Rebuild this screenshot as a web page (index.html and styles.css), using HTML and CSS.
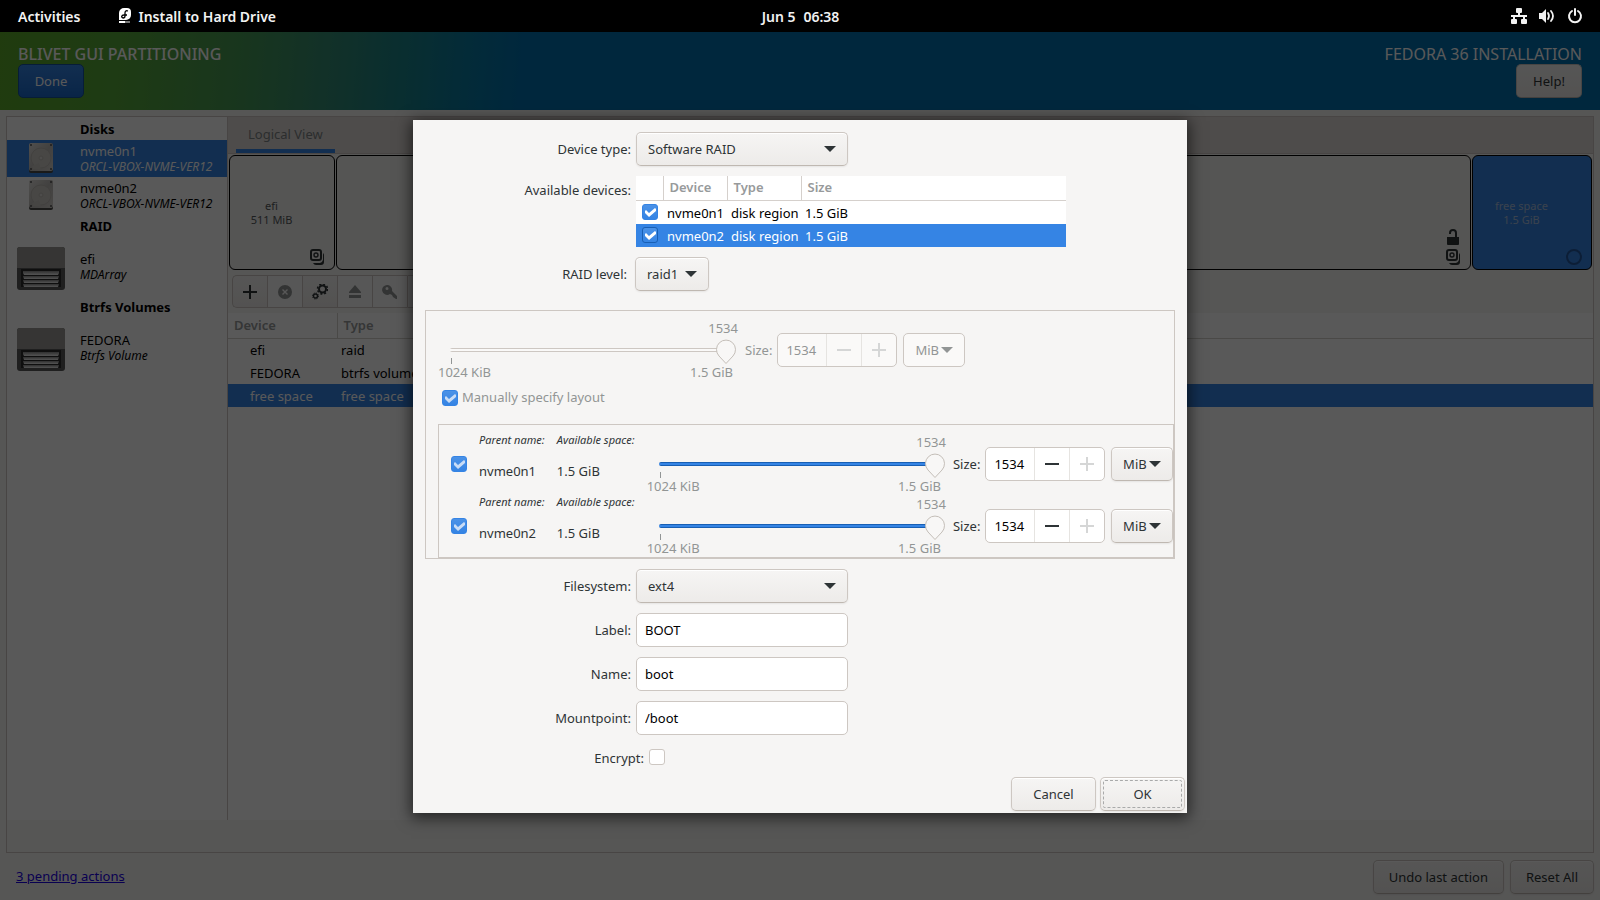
FILE: index.html
```
<!DOCTYPE html>
<html lang="en">
<head>
  <meta charset="UTF-8" />
  <meta name="viewport" content="width=device-width, initial-scale=1.0"/>
  <title>Install to Hard Drive</title>
  <link rel="stylesheet" href="styles.css">
</head>
<body>

  <!-- shared icons -->
  <svg width="0" height="0" class="defs">
    <linearGradient id="metal" x1="0" y1="0" x2="1" y2="1">
      <stop offset="0" stop-color="#e4e2df"/><stop offset="0.5" stop-color="#bdbab6"/><stop offset="1" stop-color="#d3d0cc"/>
    </linearGradient>
    <linearGradient id="tray" x1="0" y1="0" x2="0" y2="1">
      <stop offset="0" stop-color="#8a8a8a"/><stop offset="1" stop-color="#f0f0f0"/>
    </linearGradient>
    <symbol id="i-disk" viewBox="0 0 24 30">
      <rect x="0" y="1" width="24" height="29" rx="2" fill="#4a4a48"/>
      <rect x="0" y="0" width="24" height="28" rx="2" fill="url(#metal)"/>
      <circle cx="12" cy="15" r="10" fill="#cfccc7" stroke="#bdb9b4"/>
      <circle cx="12" cy="15" r="2" fill="#dddad6" stroke="#bdb9b4"/>
      <path d="M3 23l7-3 2 6H4z" fill="#c8c5c0"/>
      <g fill="#555"><circle cx="2" cy="2" r="1"/><circle cx="22" cy="2" r="1"/><circle cx="2" cy="26" r="1"/><circle cx="22" cy="26" r="1"/></g>
    </symbol>
    <symbol id="i-raid" viewBox="0 0 48 43">
      <rect width="48" height="43" rx="3" fill="#5a5a5a"/>
      <path d="M0 21V3a3 3 0 0 1 3-3h42a3 3 0 0 1 3 3v18z" fill="#9a9996"/>
      <path d="M4 22h40v18H4z" fill="#2c2c2c"/>
      <g fill="url(#tray)">
        <path d="M6 24h36v2l-1 2H7l-1-2z"/><path d="M6 29h36l-1 3H7z"/><path d="M6 33h36l-1 3H7z"/><path d="M6 37h36l-1 3H7z"/>
      </g>
    </symbol>
    <symbol id="i-stack" viewBox="0 0 16 16">
      <rect x="2" y="1" width="10" height="10" rx="2" fill="none" stroke="currentColor" stroke-width="2"/>
      <circle cx="7" cy="6" r="2" fill="none" stroke="currentColor" stroke-width="1.4"/>
      <path d="M14 4q1 1 1 2v7q0 3-3 3H7q-2 0-3-2h7q2 0 3-3z" fill="currentColor"/>
    </symbol>
    <symbol id="i-lock" viewBox="0 0 16 16">
      <path d="M2 8h12v7q0 1-1 1H3q-1 0-1-1z" fill="currentColor"/>
      <path d="M5 5V4a3 3 0 0 1 6 0v5" fill="none" stroke="currentColor" stroke-width="2"/>
    </symbol>
  </svg>

  <div class="top-bar">
    <div class="top-left">
      <span>Activities</span>
      <span class="app">
        <svg width="14" height="16" viewBox="0 0 14 16">
          <path d="M6 0h3a4 4 0 0 1 4 4v3a5 5 0 0 1-5 5H1V5a5 5 0 0 1 5-5z" fill="#fff"/>
          <path d="M10 3Q7 2 7 5v3q0 2-2 2-2-1-1-2 0-1 2-1h3" fill="none" stroke="#000" stroke-width="1.3"/>
          <path d="M1 13h6v2H1z" fill="#fff"/><path d="M7 13h5v2H7z" fill="#777"/>
        </svg>
        Install to Hard Drive
      </span>
    </div>
    <div class="clock"><span>Jun 5</span><span>06:38</span></div>
    <div class="tray">
      <svg width="16" height="16" viewBox="0 0 16 16" fill="#f2f2f2">
        <rect x="5" y="0" width="6" height="5" rx="1"/><rect x="0" y="11" width="6" height="5" rx="1"/><rect x="10" y="11" width="6" height="5" rx="1"/>
        <path d="M7 4h2v3h7v2h-2v2h-2V9H4v2H2V9H0V7h7z"/>
      </svg>
      <svg width="16" height="16" viewBox="0 0 16 16">
        <path d="M0 5h3l4-4v14l-4-4H0z" fill="#f2f2f2"/>
        <path d="M9 5q2 3 0 6" fill="none" stroke="#f2f2f2" stroke-width="1.8" stroke-linecap="round"/>
        <path d="M12 3q4 5 0 10" fill="none" stroke="#f2f2f2" stroke-width="1.8" stroke-linecap="round"/>
      </svg>
      <svg width="16" height="16" viewBox="0 0 16 16" fill="none" stroke="#f2f2f2" stroke-width="2" stroke-linecap="round">
        <path d="M5 3a6 6 0 1 0 6 0"/><path d="M8 1v6"/>
      </svg>
    </div>
  </div>

  <div class="window">
    <header class="banner">
      <div class="banner-side">
        <h1>BLIVET GUI PARTITIONING</h1>
        <button class="btn btn-done">Done</button>
      </div>
      <div class="banner-side right">
        <div class="product">FEDORA 36 INSTALLATION</div>
        <button class="btn btn-help">Help!</button>
      </div>
    </header>

    <div class="panel">
      <div class="panel-body">
        <aside class="sidebar">
          <h2>Disks</h2>
          <div class="dev selected">
            <span class="dev-icon"><svg width="24" height="30"><use href="#i-disk"/></svg></span>
            <span>nvme0n1<em>ORCL-VBOX-NVME-VER12</em></span>
          </div>
          <div class="dev">
            <span class="dev-icon"><svg width="24" height="30"><use href="#i-disk"/></svg></span>
            <span>nvme0n2<em>ORCL-VBOX-NVME-VER12</em></span>
          </div>
          <h2>RAID</h2>
          <div class="dev big">
            <span class="dev-icon"><svg width="48" height="43"><use href="#i-raid"/></svg></span>
            <span>efi<em>MDArray</em></span>
          </div>
          <h2>Btrfs Volumes</h2>
          <div class="dev big">
            <span class="dev-icon"><svg width="48" height="43"><use href="#i-raid"/></svg></span>
            <span>FEDORA<em>Btrfs Volume</em></span>
          </div>
        </aside>

        <section class="content">
          <div class="tabs"><button class="tab">Logical View</button></div>
          <div class="blocks">
            <div class="block efi">
              <div class="block-text">efi<br/>511 MiB</div>
              <div class="block-icons"><svg width="16" height="16"><use href="#i-stack"/></svg></div>
            </div>
            <div class="block main">
              <div class="block-text"></div>
              <div class="block-icons">
                <svg width="16" height="16"><use href="#i-lock"/></svg>
                <svg width="16" height="16"><use href="#i-stack"/></svg>
              </div>
            </div>
            <div class="block free">
              <div class="block-text">free space<br/>1.5 GiB</div>
              <div class="block-icons"><svg width="16" height="16" viewBox="0 0 16 16"><circle cx="8" cy="8" r="7" fill="none" stroke="#23569c" stroke-width="2"/></svg></div>
            </div>
          </div>

          <div class="toolbar">
            <button aria-label="Add device"><svg width="16" height="16" viewBox="0 0 16 16"><path d="M7 1h2v6h6v2H9v6H7V9H1V7h6z" fill="currentColor"/></svg></button>
            <button aria-label="Delete device" disabled><svg width="16" height="16" viewBox="0 0 16 16"><path fill-rule="evenodd" d="M8 1a7 7 0 1 0 0 14A7 7 0 0 0 8 1zM5 6l1-1 2 2 2-2 1 1-2 2 2 2-1 1-2-2-2 2-1-1 2-2z" fill="currentColor"/></svg></button>
            <button aria-label="Edit device"><svg width="16" height="16" viewBox="0 0 16 16" fill="none" stroke="currentColor">
              <circle cx="10.500" cy="5" r="3.500" stroke-width="2"/><circle cx="10.500" cy="5" r="5" stroke-width="1.500" stroke-dasharray="2 1.930"/>
              <circle cx="3.500" cy="12" r="2" stroke-width="1.400"/><circle cx="3.500" cy="12" r="3" stroke-width="1" stroke-dasharray="1.200 1.150"/></svg></button>
            <button aria-label="Unmount" disabled><svg width="16" height="16" viewBox="0 0 16 16" fill="currentColor"><path d="M8 1l6 7v1H2V8z"/><path d="M2 11h12v3H2z"/></svg></button>
            <button aria-label="Unlock" disabled><svg width="16" height="16" viewBox="0 0 16 16" fill="currentColor"><path fill-rule="evenodd" d="M6 1a5 5 0 1 0 2 9l2 1 1 2 3 2h1v-3L10 7a5 5 0 0 0-4-6zM5 3a1 1 0 0 1 0 3 1 1 0 0 1 0-3z"/></svg></button>
            <button aria-label="Device information" disabled></button>
          </div>

          <table class="list">
            <thead><tr><th class="col-dev">Device</th><th>Type</th></tr></thead>
            <tbody>
              <tr><td>efi</td><td>raid</td></tr>
              <tr><td>FEDORA</td><td>btrfs volume</td></tr>
              <tr class="selected"><td>free space</td><td>free space</td></tr>
            </tbody>
          </table>
        </section>
      </div>
    </div>

    <footer class="actions">
      <a href="#">3 pending actions</a>
      <div class="action-btns">
        <button class="btn">Undo last action</button>
        <button class="btn">Reset All</button>
      </div>
    </footer>

    <div class="overlay">
      <form class="dialog" role="dialog" aria-label="Create new device">
        <div class="row">
          <label for="devType">Device type:</label>
          <select id="devType" class="wide"><option>Software RAID</option></select>
        </div>
        <div class="row devices">
          <span class="row-label">Available devices:</span>
          <table class="avail">
            <thead><tr><th class="c-check"></th><th class="c-dev">Device</th><th class="c-type">Type</th><th>Size</th></tr></thead>
            <tbody>
              <tr><td><input type="checkbox" aria-label="Use nvme0n1" checked></td><td>nvme0n1</td><td>disk region</td><td>1.5 GiB</td></tr>
              <tr class="selected"><td><input type="checkbox" aria-label="Use nvme0n2" checked></td><td>nvme0n2</td><td>disk region</td><td>1.5 GiB</td></tr>
            </tbody>
          </table>
        </div>
        <div class="row raid">
          <label for="raidLevel">RAID level:</label>
          <select id="raidLevel"><option>raid1</option></select>
        </div>

        <div class="size-frame">
          <div class="size-row off">
            <div class="scale">
              <output>1534</output>
              <input type="range" aria-label="Total size" min="1" max="1534" value="1534" disabled>
              <div class="ends"><span>1024 KiB</span><span>1.5 GiB</span></div>
            </div>
            <label for="size0">Size:</label>
            <div class="spin"><input id="size0" type="text" value="1534" disabled><button type="button" class="minus" aria-label="Decrease" disabled></button><button type="button" class="plus" aria-label="Increase" disabled></button></div>
            <select class="unit" aria-label="Unit" disabled><option>MiB</option></select>
          </div>

          <div class="manual">
            <input type="checkbox" id="manual" checked disabled>
            <label for="manual">Manually specify layout</label>
          </div>

          <div class="parents">
            <div class="size-row">
              <input type="checkbox" aria-label="nvme0n1" checked disabled>
              <div class="info name"><em>Parent name:</em><span>nvme0n1</span></div>
              <div class="info space"><em>Available space:</em><span>1.5 GiB</span></div>
              <div class="scale">
                <output>1534</output>
                <input type="range" aria-label="Size on nvme0n1" min="1" max="1534" value="1534">
                <div class="ends"><span>1024 KiB</span><span>1.5 GiB</span></div>
              </div>
              <label for="size1">Size:</label>
              <div class="spin"><input id="size1" type="text" value="1534"><button type="button" class="minus" aria-label="Decrease"></button><button type="button" class="plus" aria-label="Increase" disabled></button></div>
              <select class="unit" aria-label="Unit"><option>MiB</option></select>
            </div>
            <div class="size-row">
              <input type="checkbox" aria-label="nvme0n2" checked disabled>
              <div class="info name"><em>Parent name:</em><span>nvme0n2</span></div>
              <div class="info space"><em>Available space:</em><span>1.5 GiB</span></div>
              <div class="scale">
                <output>1534</output>
                <input type="range" aria-label="Size on nvme0n2" min="1" max="1534" value="1534">
                <div class="ends"><span>1024 KiB</span><span>1.5 GiB</span></div>
              </div>
              <label for="size2">Size:</label>
              <div class="spin"><input id="size2" type="text" value="1534"><button type="button" class="minus" aria-label="Decrease"></button><button type="button" class="plus" aria-label="Increase" disabled></button></div>
              <select class="unit" aria-label="Unit"><option>MiB</option></select>
            </div>
          </div>
        </div>

        <div class="row">
          <label for="fs">Filesystem:</label>
          <select id="fs" class="wide"><option>ext4</option></select>
        </div>
        <div class="row">
          <label for="lbl">Label:</label>
          <input type="text" class="wide" id="lbl" value="BOOT">
        </div>
        <div class="row">
          <label for="nm">Name:</label>
          <input type="text" class="wide" id="nm" value="boot">
        </div>
        <div class="row">
          <label for="mnt">Mountpoint:</label>
          <input type="text" class="wide" id="mnt" value="/boot">
        </div>
        <div class="row encrypt">
          <label for="enc">Encrypt:</label>
          <input type="checkbox" id="enc">
        </div>

        <div class="dialog-btns">
          <button type="button" class="btn">Cancel</button>
          <button type="button" class="btn btn-ok">OK</button>
        </div>
      </form>
    </div>
  </div>

</body>
</html>
```
FILE: styles.css
```
* { box-sizing: border-box; }
html, body {
  margin: 0; padding: 0;
  height: 100%;
}
body {
  display: flex;
  flex-direction: column;
  overflow: hidden;
  font-family: "Noto Sans", "Open Sans", sans-serif;
  font-size: 13px;
  line-height: 15px;
  color: #2e3436;
  background: #f6f5f4;
}
button, input, select {
  font: inherit;
  color: inherit;
  margin: 0;
}
svg { display: block; }
.defs { position: absolute; }

/* shell bar */
.top-bar {
  height: 32px;
  flex: none;
  display: grid;
  grid-template-columns: 1fr auto 1fr;
  align-items: center;
  padding: 0 17px 0 18px;
  background: #000;
  color: #f2f2f2;
  font-size: 14px;
  font-weight: 600;
}
.top-left, .app, .clock, .tray {
  display: flex;
  align-items: center;
}
.top-left { gap: 38px; }
.app { gap: 6px; }
.clock { gap: 8px; }
.tray {
  justify-content: flex-end;
  gap: 12px;
}

.window {
  flex: 1;
  min-height: 0;
  position: relative;
  display: flex;
  flex-direction: column;
}
.banner {
  height: 78px;
  flex: none;
  display: flex;
  justify-content: space-between;
  padding: 12px 18px;
  color: #fff;
  background: linear-gradient(95deg, #5ca82a 0, #57a83a 120px, #479a55 240px, #348c74 330px, #1c8488 400px, #0a7ba2 470px, #006fb0 530px, #006fb0 100%);
}
.banner-side {
  display: flex;
  flex-direction: column;
  align-items: flex-start;
}
.banner-side.right { align-items: flex-end; }
.banner h1, .product {
  margin: 0;
  font-size: 16px;
  line-height: 20px;
  font-weight: 500;
}
.product { font-weight: 400; }

.btn {
  height: 34px;
  padding: 1px 15px 0;
  border: 1px solid #cdc7c2;
  border-bottom-color: #bfb8b1;
  border-radius: 5px;
  background: linear-gradient(#f6f5f4, #edebe9);
  box-shadow: inset 0 1px #fff, 0 1px 2px rgba(0, 0, 0, 0.07);
}
.btn-done {
  color: #fff;
  border-color: #15539e;
  background: linear-gradient(#3584e4, #1b6acb);
  box-shadow: none;
}
.btn-done, .btn-help { width: 66px; }
.btn-help { color: #2e3436; box-shadow: none; }

.panel {
  flex: 1;
  min-height: 0;
  margin: 6px 6px 0;
  padding-bottom: 32px;
  border: 1px solid #cdc7c2;
}
.panel-body {
  height: 100%;
  display: flex;
  background: #fff;
}
.sidebar {
  width: 221px;
  flex: none;
  border-right: 1px solid #cdc7c2;
  color: #000;
}
.sidebar h2 {
  height: 23px;
  margin: 0;
  padding: 5px 0 0 73px;
  font-size: 13px;
  line-height: 15px;
  font-weight: 700;
}
.dev {
  height: 37px;
  display: flex;
  align-items: center;
  padding-top: 1px;
}
.dev.big { height: 58px; }
.dev-icon {
  width: 73px;
  flex: none;
  padding: 0 0 2px 22px;
}
.dev.big .dev-icon { padding: 3px 0 0 10px; }
.dev em {
  display: block;
  font-size: 12px;
}
.selected {
  background: #3584e4;
  color: #fff;
}

.content {
  flex: 1;
  min-width: 0;
}
.tabs {
  height: 37px;
  padding: 0 8px;
  background: #dedbd7;
  border-bottom: 1px solid #cdc7c2;
}
.tab {
  height: 36px;
  padding: 3px 12px 0;
  border: 0;
  border-bottom: 4px solid #3584e4;
  background: none;
  color: #7f8385;
}
.blocks {
  display: flex;
  gap: 1px;
  height: 116px;
  padding: 1px 1px 0;
  background: #f6f5f4;
}
.block {
  display: flex;
  border: 1px solid #000;
  border-radius: 6px;
  background: #f3f2f1;
  font-size: 11px;
  line-height: 14px;
  text-align: center;
}
.block.efi { width: 106px; }
.block.main { flex: 1; }
.block.free {
  width: 120px;
  background: #3584e4;
  color: #c4cede;
}
.block-text {
  flex: 1;
  align-self: center;
  padding-left: 4px;
  opacity: 0.8;
}
.block-icons {
  width: 25px;
  display: flex;
  flex-direction: column;
  justify-content: flex-end;
  gap: 4px;
  padding-bottom: 4px;
}
.toolbar {
  display: flex;
  height: 43px;
  padding: 5px 4px;
  background: #f6f5f4;
}
.toolbar button {
  width: 35px;
  padding: 0;
  display: flex;
  align-items: center;
  justify-content: center;
  border: 1px solid #cdc7c2;
  border-right: 0;
  background: linear-gradient(#f6f5f4, #edebe9);
}
.toolbar button:first-child { border-radius: 5px 0 0 5px; }
.toolbar button:last-child { border-right: 1px solid #cdc7c2; border-radius: 0 5px 5px 0; }
.toolbar button:disabled { background: #faf9f8; color: #929595; }

table {
  border-collapse: collapse;
  table-layout: fixed;
}
th {
  height: 25px;
  padding: 0 6px;
  border-bottom: 1px solid #d5d0cc;
  border-left: 1px solid #d5d0cc;
  color: #979a9b;
  text-align: left;
  font-weight: 600;
}
th:first-child { border-left: 0; }
td {
  height: 23px;
  padding: 2px 4px 0;
  white-space: nowrap;
}
.list { width: 100%; color: #000; }
.list .col-dev { width: 109px; }
.list td:first-child { padding-left: 22px; }
.list .selected { color: #fff; }

.actions {
  height: 47px;
  flex: none;
  display: flex;
  align-items: center;
  justify-content: space-between;
  padding: 0 6px 0 16px;
}
.actions a { color: #1b00e8; }
.action-btns { display: flex; gap: 6px; }

/* dims the window under the dialog */
.overlay {
  position: absolute;
  inset: 0;
  display: flex;
  align-items: center;
  justify-content: center;
  background: rgba(0, 0, 0, 0.65);
}
.dialog {
  width: 100%;
  max-width: 774px;
  padding: 12px 12px 2px;
  background: #f6f5f4;
  box-shadow: 0 3px 14px 2px rgba(0, 0, 0, 0.6);
}
.row {
  display: grid;
  grid-template-columns: 206px 1fr;
  column-gap: 5px;
  align-items: center;
  justify-items: start;
  margin-bottom: 10px;
}
.row > label, .row-label {
  justify-self: end;
  padding-top: 2px;
}
.row.devices { align-items: start; }
.row-label { padding-top: 7px; }
.row.raid {
  grid-template-columns: 202px 1fr;
  column-gap: 8px;
  margin-bottom: 19px;
}
.row.encrypt {
  grid-template-columns: 219px 1fr;
  margin: 14px 0 11px;
}
.wide { width: 212px; }

select {
  appearance: none;
  height: 34px;
  padding: 1px 29px 0 11px;
  border: 1px solid #cdc7c2;
  border-bottom-color: #bfb8b1;
  border-radius: 5px;
  background:
    url("data:image/svg+xml,%3Csvg xmlns='http://www.w3.org/2000/svg' width='12' height='6'%3E%3Cpath d='M0 0h12L6 6z' fill='%232e3436'/%3E%3C/svg%3E") no-repeat right 11px center,
    linear-gradient(#f6f5f4, #edebe9);
  box-shadow: inset 0 1px #fff, 0 1px 2px rgba(0, 0, 0, 0.07);
}
.unit {
  width: 62px;
  padding: 1px 0 0 11px;
}
select:disabled {
  opacity: 1;
  color: #929595;
  background:
    url("data:image/svg+xml,%3Csvg xmlns='http://www.w3.org/2000/svg' width='12' height='6'%3E%3Cpath d='M0 0h12L6 6z' fill='%23929595'/%3E%3C/svg%3E") no-repeat right 11px center,
    #faf9f8;
  border-color: #cdc7c2;
  box-shadow: none;
}
input[type="text"] {
  height: 34px;
  padding: 0 8px;
  border: 1px solid #cdc7c2;
  border-radius: 5px;
  background: #fff;
  color: #000;
}
input[type="checkbox"] {
  appearance: none;
  display: block;
  width: 16px;
  height: 16px;
  flex: none;
  border: 1px solid #cdc7c2;
  border-radius: 3px;
  background: #fff;
}
input[type="checkbox"]:checked {
  border-color: #3584e4;
  background: url("data:image/svg+xml,%3Csvg xmlns='http://www.w3.org/2000/svg' width='14' height='14'%3E%3Cpath d='M2 6l1-1 3 3 6-5 1 1v2l-7 6-4-4z' fill='%23fff'/%3E%3C/svg%3E") no-repeat center, linear-gradient(#4b92e7, #3584e4);
}
input[type="checkbox"]:checked:disabled {
  background: url("data:image/svg+xml,%3Csvg xmlns='http://www.w3.org/2000/svg' width='14' height='14'%3E%3Cpath d='M2 6l1-1 3 3 6-5 1 1v2l-7 6-4-4z' fill='%23c8dcf6'/%3E%3C/svg%3E") no-repeat center, linear-gradient(#4b92e7, #3584e4);
}
.selected input[type="checkbox"]:checked { border-color: #185fb4; }

.avail {
  width: 430px;
  background: #fff;
  color: #000;
}
.avail .c-check { width: 27px; }
.avail .c-dev { width: 64px; }
.avail .c-type { width: 74px; }
.avail td:first-child { padding: 0 0 0 6px; }
.avail .selected { color: #fff; }

.size-frame {
  margin-bottom: 10px;
  padding: 8px 0 0 12px;
  border: 1px solid #cdc7c2;
}
.size-row {
  display: flex;
  align-items: center;
  height: 62px;
}
.size-row > label {
  margin: 0 5px 0 7px;
  padding-top: 1px;
}
.off { color: #929595; }
.scale {
  width: 300px;
  color: #929595;
}
.scale output {
  display: block;
  line-height: 18px;
  text-align: right;
}
.ends {
  display: flex;
  justify-content: space-between;
  padding-right: 5px;
  line-height: 17px;
}
.ends::before {
  content: "";
  width: 1px;
  height: 6px;
  margin: -6px -14px 0 13px;
  background: #929595;
}
.ends span:last-child { margin-left: auto; }
input[type="range"] {
  appearance: none;
  display: block;
  width: 286px;
  height: 20px;
  margin: 3px 0 4px 12px;
  background: none;
}
/* the line stops behind the thumb */
input[type="range"]::-webkit-slider-runnable-track {
  height: 4px;
  border-radius: 2px;
  background: linear-gradient(#185fb4 1px, #3584e4 1px, #3584e4 3px, #185fb4 3px) 0 0 / calc(100% - 10px) 100% no-repeat;
}
input[type="range"]::-webkit-slider-thumb {
  appearance: none;
  width: 20px;
  height: 25px;
  margin-top: -9px;
  background: url("data:image/svg+xml,%3Csvg xmlns='http://www.w3.org/2000/svg' width='20' height='25'%3E%3Cpath d='M10 24.500L3 17A9.500 9.500 0 1 1 17 17z' fill='%23f8f7f6' stroke='%23c4beb8'/%3E%3C/svg%3E") no-repeat;
}
input[type="range"]:disabled::-webkit-slider-runnable-track {
  background: linear-gradient(#cdc7c2 1px, #faf9f8 1px, #faf9f8 3px, #cdc7c2 3px) 0 0 / calc(100% - 10px) 100% no-repeat;
}
.spin {
  display: flex;
  width: 120px;
  height: 34px;
  margin-right: 6px;
  border: 1px solid #cdc7c2;
  border-radius: 5px;
  background: #fff;
}
.spin input[type="text"] {
  width: 48px;
  height: 32px;
  border: 0;
  background: none;
}
.spin button {
  flex: 1;
  padding: 0;
  border: 0;
  border-left: 1px solid #e6e4e1;
  background: linear-gradient(currentColor, currentColor) center / 14px 2px no-repeat;
}
.spin .plus {
  background:
    linear-gradient(currentColor, currentColor) center / 14px 2px no-repeat,
    linear-gradient(currentColor, currentColor) center / 2px 14px no-repeat;
}
.spin button:disabled { color: #d5d6d6; }
.off .spin { background: #faf9f8; }
.off .spin input[type="text"] { color: #929595; }

.manual {
  display: flex;
  align-items: center;
  gap: 4px;
  height: 16px;
  margin: 9px 0 18px 4px;
  color: #929595;
}
.parents {
  padding: 8px 0 0 12px;
  border: 1px solid #cdc7c2;
}
.parents .size-row > input { margin-right: 12px; }
.info {
  align-self: flex-start;
  display: flex;
  flex-direction: column;
  gap: 18px;
}
.info em {
  font-size: 11px;
  line-height: 13px;
}
.info.name { width: 78px; }
.info.space { width: 90px; }

.dialog-btns {
  display: flex;
  justify-content: flex-end;
  gap: 4px;
  margin-right: -10px;
}
.dialog-btns .btn { width: 85px; }
.btn-ok {
  outline: 1px dashed #a9aaaa;
  outline-offset: -4px;
}
```
